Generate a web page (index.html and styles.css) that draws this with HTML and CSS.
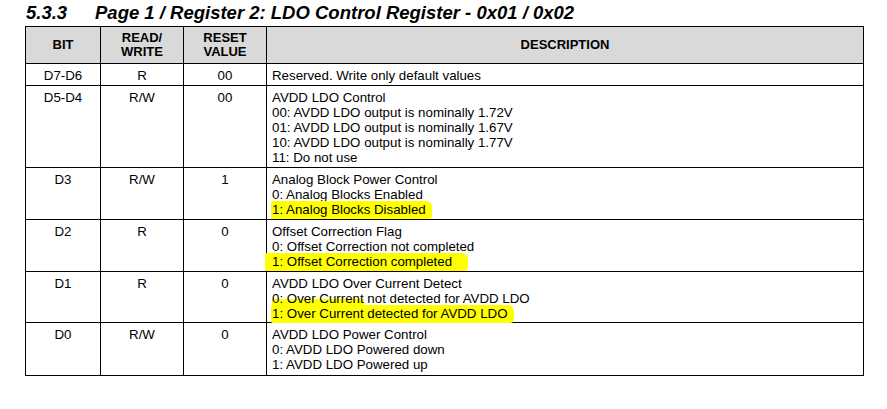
FILE: index.html
```html
<!DOCTYPE html>
<html>
<head>
<meta charset="utf-8">
<link rel="stylesheet" href="styles.css">
</head>
<body>
<div class="page">
  <h2 class="title"><span class="num">5.3.3</span><span class="name">Page 1 / Register 2: LDO Control Register - 0x01 / 0x02</span></h2>
  <table class="reg">
    <colgroup>
      <col class="c-bit"><col class="c-rw"><col class="c-rst"><col class="c-desc">
    </colgroup>
    <thead>
      <tr><th>BIT</th><th>READ/<br>WRITE</th><th>RESET<br>VALUE</th><th>DESCRIPTION</th></tr>
    </thead>
    <tbody>
      <tr class="r1"><td class="ctr">D7-D6</td><td class="ctr">R</td><td class="ctr">00</td><td>Reserved. Write only default values</td></tr>
      <tr class="r5"><td class="ctr">D5-D4</td><td class="ctr">R/W</td><td class="ctr">00</td><td>AVDD LDO Control<br>00: AVDD LDO output is nominally 1.72V<br>01: AVDD LDO output is nominally 1.67V<br>10: AVDD LDO output is nominally 1.77V<br>11: Do not use</td></tr>
      <tr class="r3"><td class="ctr">D3</td><td class="ctr">R/W</td><td class="ctr">1</td><td>Analog Block Power Control<br>0: Analog Blocks Enabled<br><span class="hl hl-a">1: Analog Blocks Disabled</span></td></tr>
      <tr class="r3"><td class="ctr">D2</td><td class="ctr">R</td><td class="ctr">0</td><td>Offset Correction Flag<br>0: Offset Correction not completed<br><span class="hl hl-b">1: Offset Correction completed</span></td></tr>
      <tr class="r3b"><td class="ctr">D1</td><td class="ctr">R</td><td class="ctr">0</td><td>AVDD LDO Over Current Detect<br><span class="hl-low">0: Over Current</span> not detected for AVDD LDO<br><span class="hl hl-c">1: Over Current detected for AVDD LDO</span></td></tr>
      <tr class="r3c"><td class="ctr">D0</td><td class="ctr">R/W</td><td class="ctr">0</td><td>AVDD LDO Power Control<br>0: AVDD LDO Powered down<br>1: AVDD LDO Powered up</td></tr>
    </tbody>
  </table>
</div>
</body>
</html>
```
FILE: styles.css
```css
html, body {
  margin: 0;
  padding: 0;
  background: #fff;
}
.page {
  padding: 0 0 0 25px;
  font-family: "Liberation Sans", Arial, sans-serif;
  color: #000;
}
.title {
  margin: 0;
  height: 26px;
  display: flex;
  align-items: center;
  font-size: 18.5px;
  font-weight: bold;
  font-style: italic;
  line-height: 20px;
}
.title .num {
  width: 69px;
  padding-left: 1px;
}
.reg {
  border-collapse: collapse;
  width: 839px;
  font-size: 13.3px;
  line-height: 15px;
  table-layout: fixed;
}
.c-bit { width: 75px; }
.c-rw { width: 83px; }
.c-rst { width: 83px; }
.reg th, .reg td {
  border: 1px solid #000;
  padding: 4px 5px 0 5px;
  vertical-align: top;
  text-align: left;
}
.reg th {
  background: #d9d9d9;
  font-weight: bold;
  font-size: 13px;
  text-align: center;
  vertical-align: middle;
  line-height: 14.5px;
  padding: 0 5px;
  height: 37px;
  box-sizing: border-box;
}
.reg tr.r1 td { height: 22px; box-sizing: border-box; }
.reg tr.r5 td { height: 82px; box-sizing: border-box; }
.reg tr.r3 td { height: 52px; box-sizing: border-box; }
.reg tr.r3b td { height: 51px; box-sizing: border-box; }
.reg tr.r3c td { height: 53px; box-sizing: border-box; }
.reg td.ctr {
  text-align: center;
}
.hl {
  background: #ffff00;
  padding: 1px 6px 2px 1px;
  margin-left: -1px;
  border-radius: 2px 6px 4px 2px;
}
.hl-b {
  padding-right: 16px;
  margin-left: -7px;
  padding-left: 7px;
}
.hl-low {
  background: linear-gradient(to bottom, transparent 45%, #ffff00 45%);
  padding-bottom: 2px;
}
```
